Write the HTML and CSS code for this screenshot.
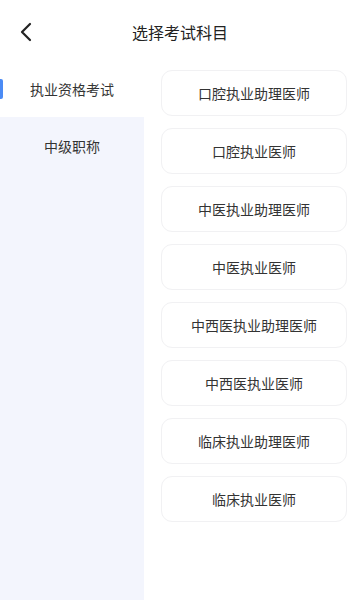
FILE: index.html
```html
<!DOCTYPE html>
<html lang="zh">
<head>
<meta charset="utf-8">
<link rel="stylesheet" href="styles.css">
</head>
<body>
<div class="page">
  <header class="header">
    <span class="back">
      <svg width="14" height="20" viewBox="0 0 14 20"><path d="M11 2 L3 10 L11 18" fill="none" stroke="#222" stroke-width="2.2" stroke-linecap="round" stroke-linejoin="round"/></svg>
    </span>
    <h1 class="title">选择考试科目</h1>
  </header>
  <div class="body">
    <nav class="side">
      <div class="side-item active">执业资格考试</div>
      <div class="side-item">中级职称</div>
      <div class="side-rest"></div>
    </nav>
    <main class="list">
      <div class="card">口腔执业助理医师</div>
      <div class="card">口腔执业医师</div>
      <div class="card">中医执业助理医师</div>
      <div class="card">中医执业医师</div>
      <div class="card">中西医执业助理医师</div>
      <div class="card">中西医执业医师</div>
      <div class="card">临床执业助理医师</div>
      <div class="card">临床执业医师</div>
    </main>
  </div>
</div>
</body>
</html>
```

FILE: styles.css
```css
* { box-sizing: border-box; }
html, body { margin: 0; padding: 0; background: #fff; }
body {
  font-family: "Noto Sans CJK SC", "Noto Sans", sans-serif;
  color: #333;
  width: 360px;
  height: 600px;
  overflow: hidden;
}
.page { display: flex; flex-direction: column; height: 600px; }
.header {
  height: 60px;
  flex: none;
  position: relative;
  display: flex;
  align-items: center;
  justify-content: center;
}
.back {
  position: absolute;
  left: 19px;
  top: 22px;
  width: 14px;
  height: 20px;
  display: flex;
}
.title {
  margin: 0;
  font-size: 16px;
  font-weight: 400;
  color: #222;
  line-height: 20px;
  padding-top: 4px;
}
.body { flex: 1; display: flex; min-height: 0; }
.side {
  width: 144px;
  flex: none;
  display: flex;
  flex-direction: column;
  background: #f3f5fd;
}
.side-item {
  height: 57px;
  display: flex;
  align-items: center;
  justify-content: center;
  font-size: 14px;
  color: #333;
  position: relative;
}
.side-item.active { background: #fff; }
.side-item.active::before {
  content: "";
  position: absolute;
  left: 0;
  top: 19px;
  width: 3px;
  height: 20px;
  background: #4b8bf5;
  border-radius: 0 2px 2px 0;
}
.side-rest { flex: 1; }
.list {
  flex: 1;
  padding: 10px 13px 0 17px;
  display: flex;
  flex-direction: column;
  gap: 12px;
}
.card {
  height: 46px;
  border: 1px solid #f1f1f3;
  border-radius: 11px;
  display: flex;
  align-items: center;
  justify-content: center;
  font-size: 14px;
  color: #333;
  background: #fff;
}
```
